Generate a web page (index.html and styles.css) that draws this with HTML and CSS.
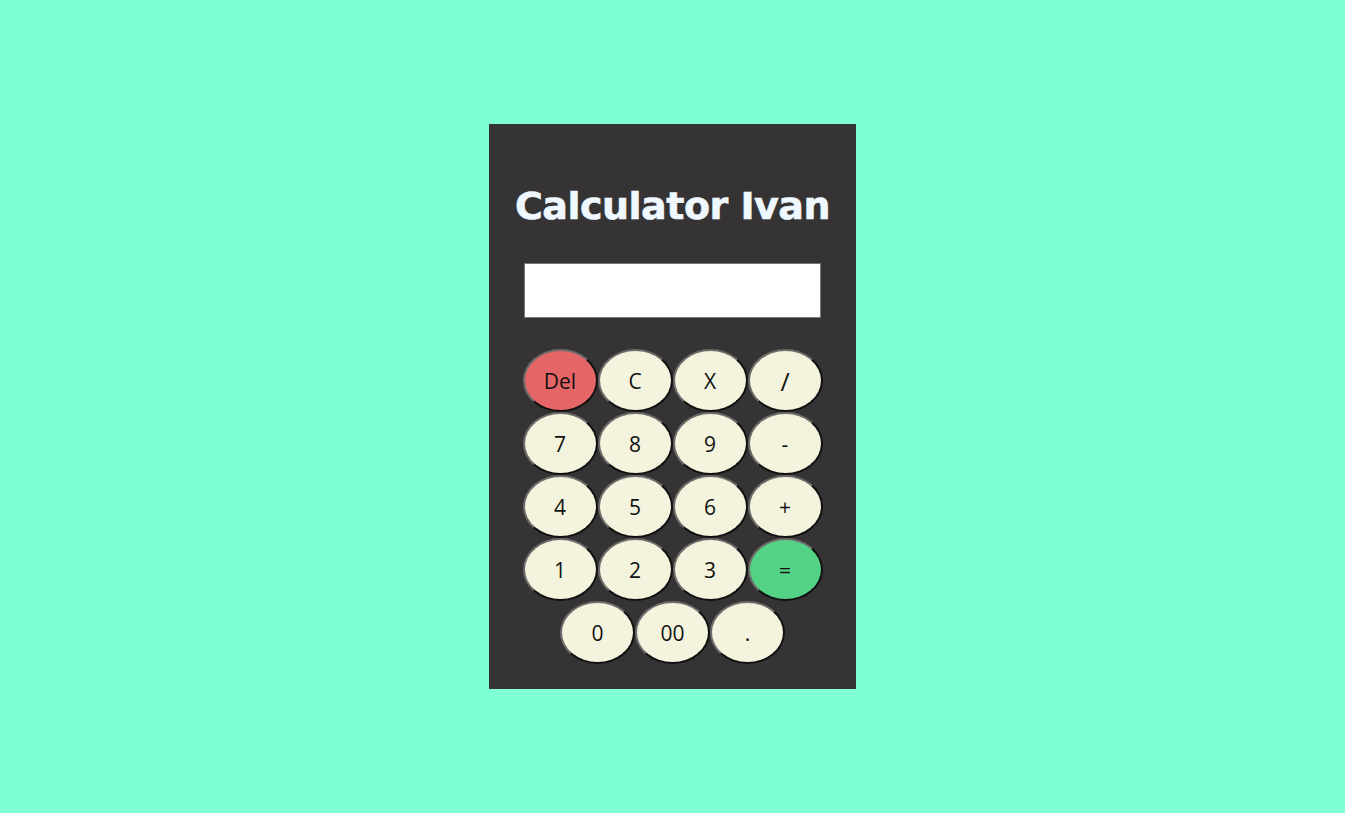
FILE: index.html
```html
<!DOCTYPE html>
<html lang="en">
<head>
<meta charset="utf-8">
<title>Calculator Ivan</title>
<link rel="stylesheet" href="styles.css">
</head>
<body>
  <main class="calculator">
    <h1 class="title">Calculator Ivan</h1>
    <input class="display" type="text" aria-label="display">
    <div class="keys">
      <button class="key key-del">Del</button>
      <button class="key">C</button>
      <button class="key">X</button>
      <button class="key key-big">/</button>
      <button class="key">7</button>
      <button class="key">8</button>
      <button class="key">9</button>
      <button class="key">-</button>
      <button class="key">4</button>
      <button class="key">5</button>
      <button class="key">6</button>
      <button class="key">+</button>
      <button class="key">1</button>
      <button class="key">2</button>
      <button class="key">3</button>
      <button class="key key-eq">=</button>
      <button class="key">0</button>
      <button class="key">00</button>
      <button class="key">.</button>
    </div>
  </main>
</body>
</html>
```

FILE: styles.css
```css
* { box-sizing: border-box; }

html, body {
  margin: 0;
  padding: 0;
}

body {
  background: #7fffd4;
  min-height: 100vh;
  display: flex;
  align-items: center;
  justify-content: center;
  font-family: "Open Sans", "Liberation Sans", sans-serif;
}

.calculator {
  width: 367px;
  height: 565px;
  background: #363334;
  display: flex;
  flex-direction: column;
  align-items: center;
  padding-top: 58px;
}

.title {
  margin: 0;
  color: #f0f8ff;
  font-family: "DejaVu Sans", "Open Sans", sans-serif;
  font-weight: 700;
  font-size: 38px;
  line-height: 48px;
  letter-spacing: -0.5px;
  -webkit-text-stroke: 0.6px #f0f8ff;
}

.display {
  margin-top: 33px;
  width: 297px;
  height: 55px;
  border: 1px solid #777;
  background: #fff;
  outline: none;
}

.keys {
  margin-top: 31px;
  width: 300px;
  display: flex;
  flex-wrap: wrap;
  justify-content: center;
}

.key {
  width: 75px;
  height: 63px;
  margin: 0;
  border-radius: 50%;
  background: #f4f4de;
  border: 2px solid;
  border-color: #6e6b6b #111 #111 #6e6b6b;
  font-family: "Open Sans", "Liberation Sans", sans-serif;
  font-size: 21px;
  color: #111;
  padding: 0;
  cursor: pointer;
}

.key-big { font-size: 25px; }

.key-del { background: #e66566; }

.key-eq { background: #54d286; }
```
